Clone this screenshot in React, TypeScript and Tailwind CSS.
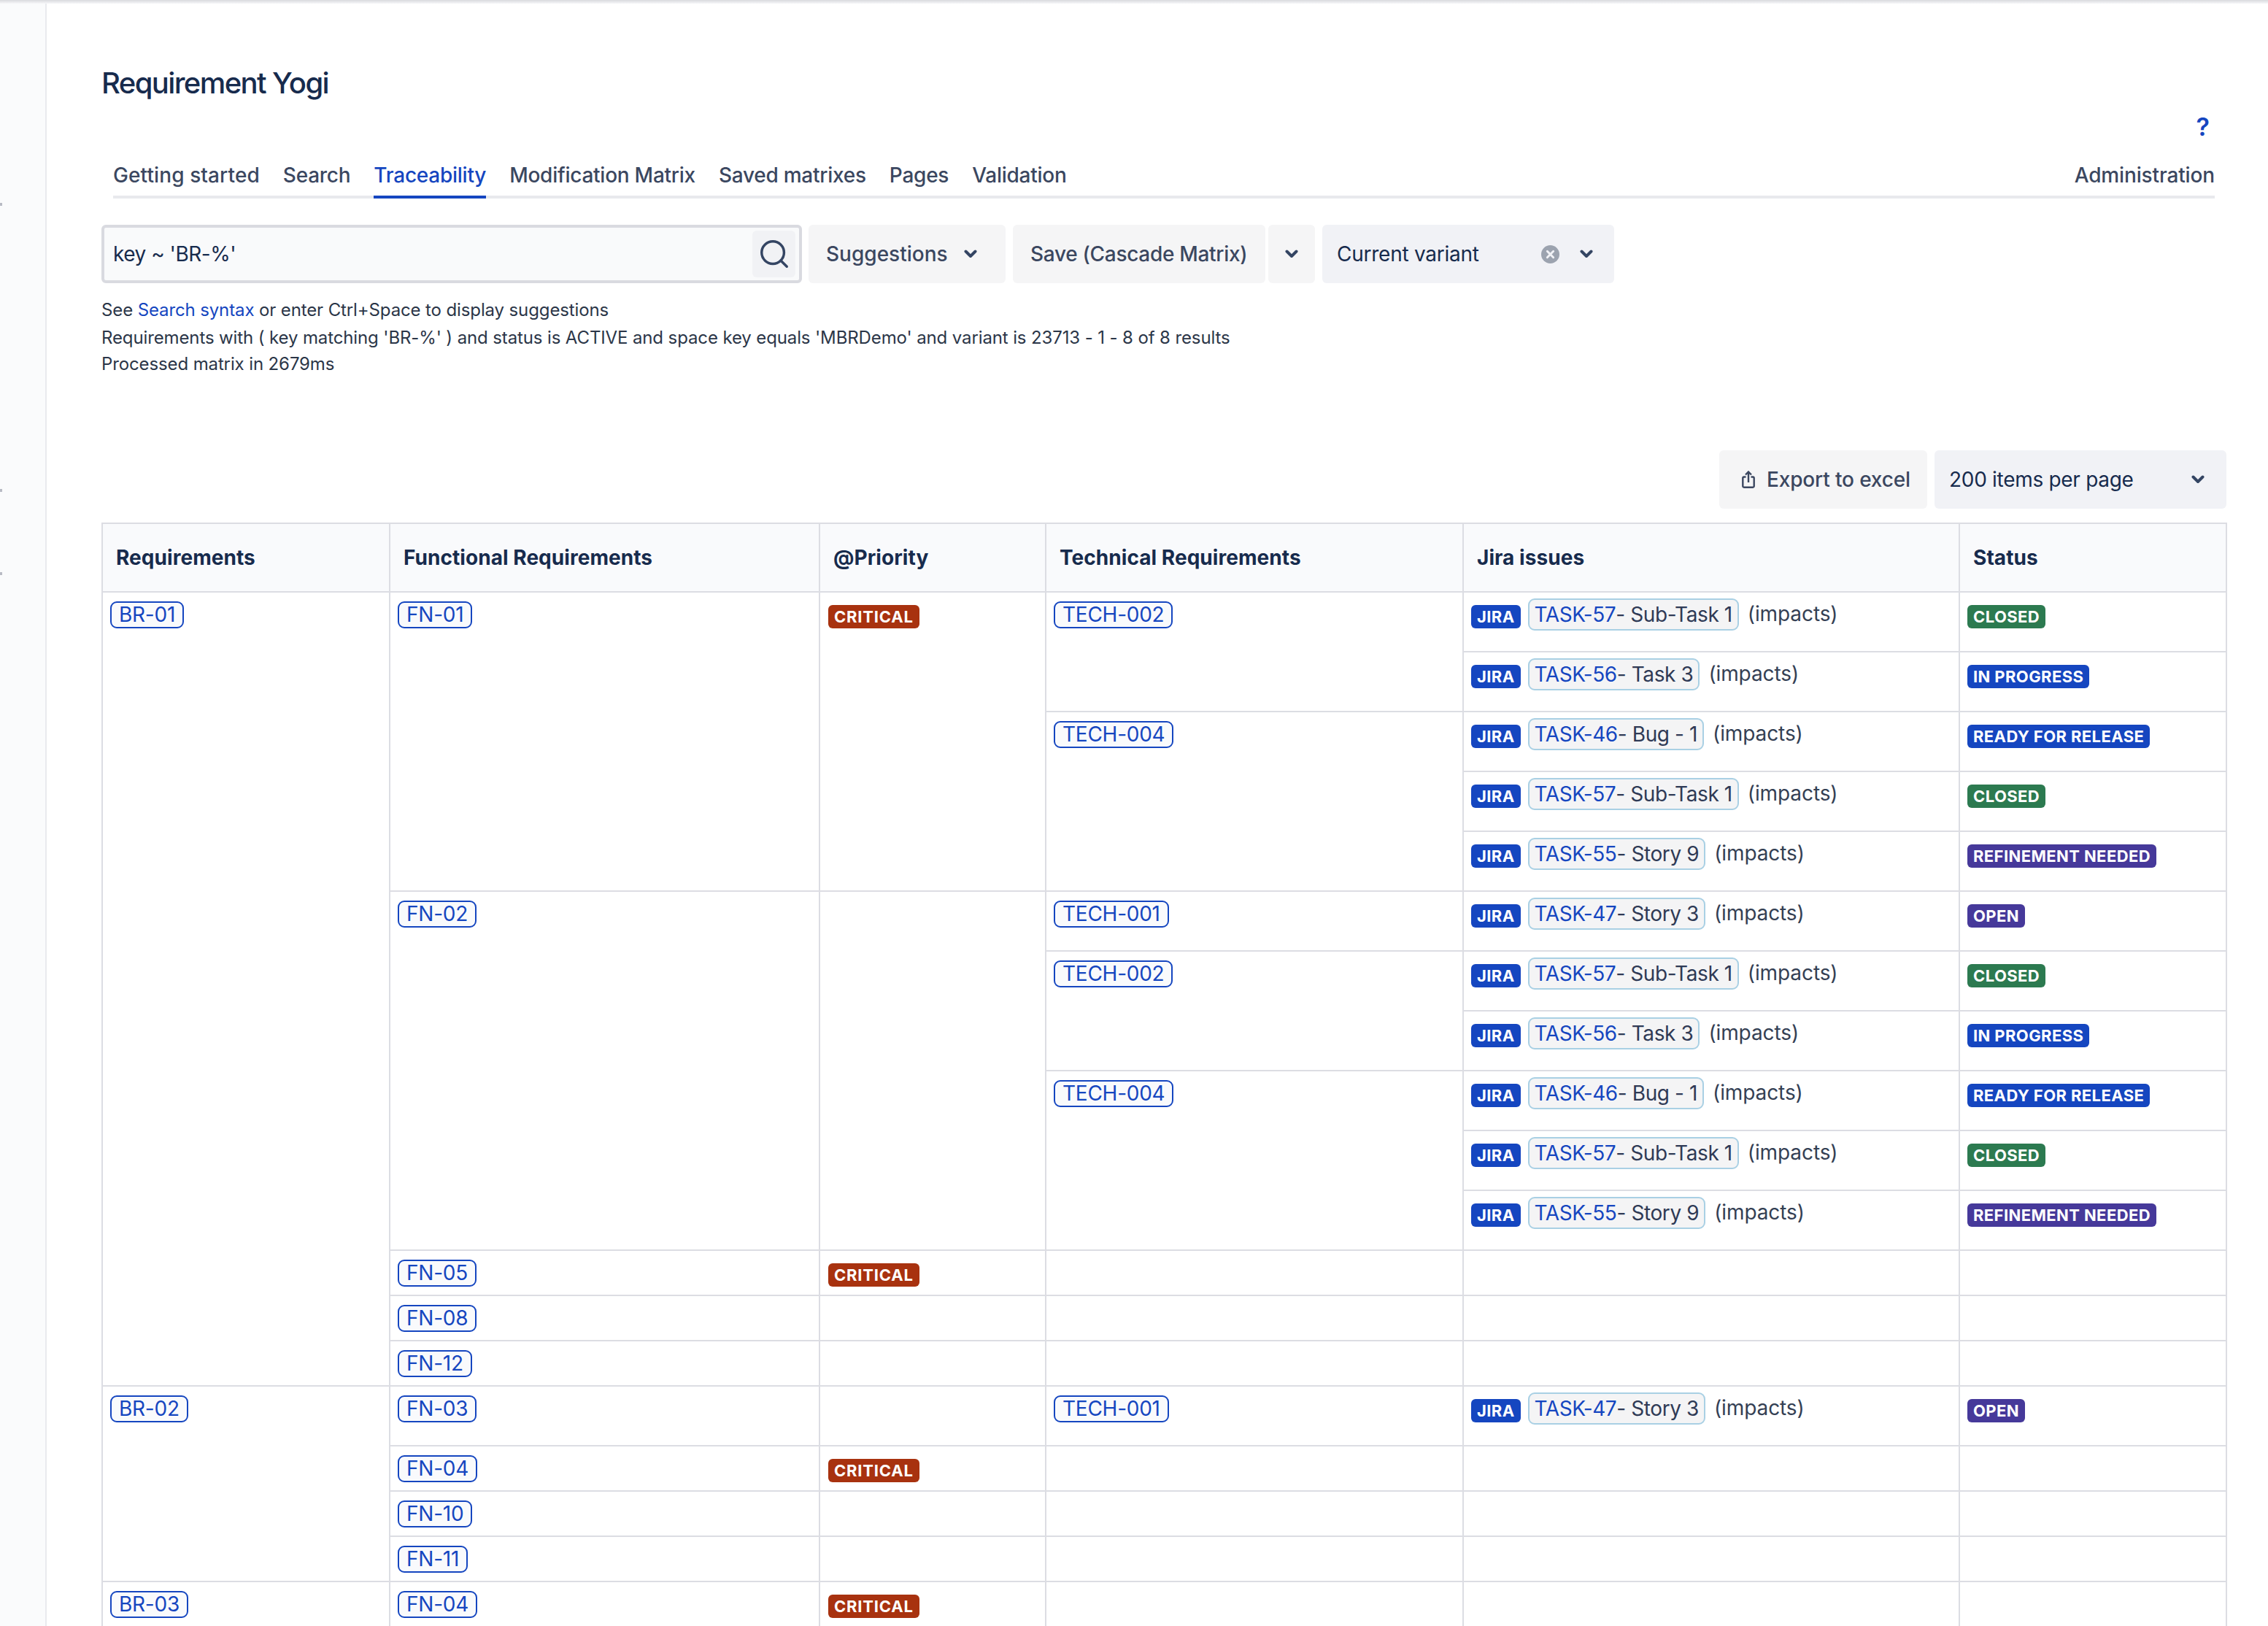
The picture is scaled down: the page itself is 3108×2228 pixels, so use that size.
import { Search } from "lucide-react"

type JiraRow = { task: string; title: string; status: string }

const statusColors: Record<string, string> = {
  CLOSED: "bg-[#2c7a50]",
  "IN PROGRESS": "bg-[#1546c0]",
  "READY FOR RELEASE": "bg-[#1546c0]",
  "REFINEMENT NEEDED": "bg-[#46399a]",
  OPEN: "bg-[#46399a]",
}

const sub57 = { task: "TASK-57", title: "- Sub-Task 1", status: "CLOSED" }
const task56 = { task: "TASK-56", title: "- Task 3", status: "IN PROGRESS" }
const bug46 = { task: "TASK-46", title: "- Bug - 1", status: "READY FOR RELEASE" }
const story55 = { task: "TASK-55", title: "- Story 9", status: "REFINEMENT NEEDED" }
const story47 = { task: "TASK-47", title: "- Story 3", status: "OPEN" }

const tabs = [
  { label: "Getting started", className: "tracking-[0.1px] text-[#3b4760]" },
  { label: "Search", className: "tracking-[-0.25px] text-[#3b4760]" },
  { label: "Traceability", className: "-mb-[4px] h-[51px] border-b-4 border-[#1546c0] tracking-[-0.25px] text-[#1546c0]" },
  { label: "Modification Matrix", className: "tracking-[-0.25px] text-[#3b4760]" },
  { label: "Saved matrixes", className: "tracking-[-0.25px] text-[#3b4760]" },
  { label: "Pages", className: "tracking-[-0.25px] text-[#3b4760]" },
  { label: "Validation", className: "tracking-[-0.25px] text-[#3b4760]" },
]

function Chevron({ className = "" }: { className?: string }) {
  return (
    <svg width="18" height="12" viewBox="0 0 18 12" fill="none" stroke="#344563" strokeWidth="4" strokeLinecap="round" strokeLinejoin="round" className={`shrink-0 ${className}`}>
      <path d="M2.500 2.500L9 9l6.500-6.500" />
    </svg>
  )
}

function Pill({ label }: { label: string }) {
  return (
    <span className="inline-block h-[37px] rounded-[9px] border-2 border-[#1546c0] bg-[#f9fafc] px-[10px] text-[28px] leading-[33px] tracking-[-0.25px] text-[#1546c0] align-top">
      {label}
    </span>
  )
}

function Lozenge({ label, color }: { label: string; color: string }) {
  return (
    <span className={`inline-block h-[32px] rounded-[6px] px-[8px] text-[22px] leading-[32px] font-bold tracking-[0.4px] text-white align-top ${color}`}>
      {label}
    </span>
  )
}

function JiraCells({ row }: { row: JiraRow }) {
  return (
    <>
      <td className="border-2 border-[#dcdde3] px-[10px] pt-[8px] align-top">
        <div className="flex items-start">
          <span className="mt-[9px]">
            <Lozenge label="JIRA" color="bg-[#1546c0]" />
          </span>
          <span className="ml-[10px] h-[44px] rounded-[9px] border-2 border-[#a9d0e4] bg-[#f4f4f5] px-[7px] text-[28px] leading-[40px] tracking-[-0.4px] text-[#2f3a55]">
            <span className="text-[#1546c0]">{row.task}</span>
            {row.title}
          </span>
          <span className="ml-[12px] text-[28px] leading-[43px] tracking-[-0.1px] text-[#344054]">(impacts)</span>
        </div>
      </td>
      <td className="border-2 border-[#dcdde3] px-[10px] pt-[17px] align-top">
        <Lozenge label={row.status} color={statusColors[row.status]} />
      </td>
    </>
  )
}

function EmptyCells() {
  return (
    <>
      <td className="border-2 border-[#dcdde3]" />
      <td className="border-2 border-[#dcdde3]" />
      <td className="border-2 border-[#dcdde3]" />
    </>
  )
}

function Critical() {
  return (
    <span className="ml-[1px] inline-block h-[32px] rounded-[6px] bg-[#a8320f] px-[8px] text-[22px] leading-[32px] font-bold tracking-[0.8px] text-white align-top">
      CRITICAL
    </span>
  )
}

function Cell({ children, rowSpan, pt = "pt-[12px]" }: { children?: React.ReactNode; rowSpan?: number; pt?: string }) {
  return (
    <td rowSpan={rowSpan} className={`border-2 border-[#dcdde3] px-[10px] align-top ${pt}`}>
      {children}
    </td>
  )
}

function ShortRow({ fn, critical, first, tall }: { fn: string; critical?: boolean; first?: string; tall?: boolean }) {
  return (
    <tr className={tall ? "h-[82px]" : "h-[62px]"}>
      {first && (
        <Cell>
          <Pill label={first} />
        </Cell>
      )}
      <Cell>
        <Pill label={fn} />
      </Cell>
      <Cell pt="pt-[17px]">{critical && <Critical />}</Cell>
      <EmptyCells />
    </tr>
  )
}

export default function App() {
  return (
    <div className="relative flex h-[2228px] overflow-hidden bg-white font-['Inter',sans-serif]">
      <div className="absolute inset-x-0 top-0 h-[5px] bg-gradient-to-b from-[#d9dade] to-[#f7f7f9]" />
      <span className="absolute left-0 top-[278px] h-[4px] w-[3px] bg-[#b8bbc4]" />
      <span className="absolute left-0 top-[670px] h-[4px] w-[3px] bg-[#b8bbc4]" />
      <span className="absolute left-0 top-[784px] h-[4px] w-[3px] bg-[#b8bbc4]" />
      <aside className="w-[64px] shrink-0 border-r-2 border-[#e9eaee] bg-[#fafbfc]" />

      <main className="min-w-0 flex-1 pl-[75px] pr-[57px]">
        <h1 className="mt-[90px] text-[40px] leading-[48px] font-medium tracking-[-1.6px] text-[#172b4d]">Requirement Yogi</h1>

        <div className="mt-[18px] flex justify-end pr-[23px]">
          <span className="text-[34px] leading-[36px] font-semibold text-[#1546c0]">?</span>
        </div>

        <nav className="ml-[16px] mr-[16px] mt-[29px] flex h-[51px] justify-between border-b-4 border-[#e8e9ed]">
          <div className="flex gap-[32px]">
            {tabs.map((tab) => (
              <a key={tab.label} className={`text-[28px] leading-[38px] font-medium ${tab.className}`}>
                {tab.label}
              </a>
            ))}
          </div>
          <a className="text-[28px] leading-[38px] font-medium tracking-[-0.14px] text-[#3b4760]">Administration</a>
        </nav>

        <div className="mt-[36px] flex h-[80px]">
          <div className="flex w-[960px] items-center rounded-[6px] border-4 border-[#d9dae0] bg-[#f9fafb] pl-[12px] pr-[5px]">
            <span className="flex-1 text-[28px] tracking-[-0.5px] text-[#172b4d]">key ~ 'BR-%'</span>
            <span className="flex h-[64px] w-[59px] items-center justify-center rounded-[6px] bg-[#f1f2f5]">
              <Search size={46} strokeWidth={1.8} className="text-[#344563]" />
            </span>
          </div>
          <button className="ml-[9px] flex w-[270px] items-center rounded-[6px] bg-[#f5f5f6] pl-[24px] text-[28px] font-medium text-[#3b4760]">
            Suggestions
            <Chevron className="ml-[22px]" />
          </button>
          <button className="ml-[10px] w-[346px] rounded-[6px] bg-[#f5f5f6] pl-[24px] text-left text-[28px] font-medium tracking-[-0.3px] whitespace-nowrap text-[#3b4760]">
            Save (Cascade Matrix)
          </button>
          <button className="ml-[4px] flex w-[64px] items-center justify-center rounded-[6px] bg-[#f5f5f6]">
            <Chevron />
          </button>
          <div className="ml-[10px] flex w-[400px] items-center rounded-[6px] bg-[#f1f2f6] pl-[20px] text-[28px] tracking-[-0.25px] text-[#172b4d]">
            <span className="flex-1">Current variant</span>
            <svg width="25" height="25" viewBox="0 0 24 24" className="mr-[28px]">
              <circle cx="12" cy="12" r="12" fill="#9ca3af" />
              <path d="M8 8l8 8M16 8l-8 8" stroke="#f1f2f6" strokeWidth="2.800" strokeLinecap="round" />
            </svg>
            <Chevron className="mr-[29px]" />
          </div>
        </div>

        <div className="mt-[19px] text-[24px] tracking-[-0.12px] text-[#2b3648]">
          <p className="leading-[36px]">
            See <a className="text-[#1546c0]">Search syntax</a> or enter Ctrl+Space to display suggestions
          </p>
          <p className="mt-[2px] leading-[36px]">
            Requirements with ( key matching 'BR-%' ) and status is ACTIVE and space key equals 'MBRDemo' and variant is 23713 - 1 - 8 of 8 results
          </p>
          <p className="leading-[36px]">Processed matrix in 2679ms</p>
        </div>

        <div className="mt-[100px] flex h-[80px] justify-end">
          <button className="flex w-[285px] items-center rounded-[6px] bg-[#f5f5f6] pl-[31px] text-[28px] font-medium tracking-[-0.15px] text-[#3b4760]">
            <svg width="18" height="24" viewBox="0 0 18 24" fill="none" stroke="#3b4760" strokeWidth="2.400" className="mr-[16px] shrink-0">
              <path d="M5.500 8.500H3A1.800 1.800 0 0 0 1.300 10.300V21A1.800 1.800 0 0 0 3 22.700H15A1.800 1.800 0 0 0 16.700 21V10.300A1.800 1.800 0 0 0 15 8.500H12.500" />
              <path d="M9 16V1.500M5 5.500l4-4 4 4" />
            </svg>
            Export to excel
          </button>
          <button className="ml-[10px] flex w-[400px] items-center justify-between rounded-[6px] bg-[#f1f2f6] pl-[20px] pr-[30px] text-[28px] tracking-[-0.3px] text-[#172b4d]">
            200 items per page
            <Chevron />
          </button>
        </div>

        <table className="mt-[19px] w-[2911px] table-fixed border-collapse border-2 border-[#dcdde3]">
          <colgroup>
            <col className="w-[394px]" />
            <col className="w-[589px]" />
            <col className="w-[310px]" />
            <col className="w-[572px]" />
            <col className="w-[680px]" />
            <col className="w-[366px]" />
          </colgroup>
          <thead>
            <tr className="h-[94px] bg-[#f9fafc] text-left text-[28px] tracking-[0.05px] text-[#172b4d]">
              {["Requirements", "Functional Requirements", "@Priority", "Technical Requirements", "Jira issues", "Status"].map((h) => (
                <th key={h} className="border-2 border-[#dcdde3] pl-[18px] font-bold">
                  {h}
                </th>
              ))}
            </tr>
          </thead>
          <tbody>
            <tr className="h-[82px]">
              <Cell rowSpan={14}>
                <Pill label="BR-01" />
              </Cell>
              <Cell rowSpan={5}>
                <Pill label="FN-01" />
              </Cell>
              <Cell rowSpan={5} pt="pt-[17px]">
                <Critical />
              </Cell>
              <Cell rowSpan={2}>
                <Pill label="TECH-002" />
              </Cell>
              <JiraCells row={sub57} />
            </tr>
            <tr className="h-[82px]">
              <JiraCells row={task56} />
            </tr>
            <tr className="h-[82px]">
              <Cell rowSpan={3}>
                <Pill label="TECH-004" />
              </Cell>
              <JiraCells row={bug46} />
            </tr>
            <tr className="h-[82px]">
              <JiraCells row={sub57} />
            </tr>
            <tr className="h-[82px]">
              <JiraCells row={story55} />
            </tr>
            <tr className="h-[82px]">
              <Cell rowSpan={6}>
                <Pill label="FN-02" />
              </Cell>
              <Cell rowSpan={6} />
              <Cell>
                <Pill label="TECH-001" />
              </Cell>
              <JiraCells row={story47} />
            </tr>
            <tr className="h-[82px]">
              <Cell rowSpan={2}>
                <Pill label="TECH-002" />
              </Cell>
              <JiraCells row={sub57} />
            </tr>
            <tr className="h-[82px]">
              <JiraCells row={task56} />
            </tr>
            <tr className="h-[82px]">
              <Cell rowSpan={3}>
                <Pill label="TECH-004" />
              </Cell>
              <JiraCells row={bug46} />
            </tr>
            <tr className="h-[82px]">
              <JiraCells row={sub57} />
            </tr>
            <tr className="h-[82px]">
              <JiraCells row={story55} />
            </tr>
            <ShortRow fn="FN-05" critical />
            <ShortRow fn="FN-08" />
            <ShortRow fn="FN-12" />
            <tr className="h-[82px]">
              <Cell rowSpan={4}>
                <Pill label="BR-02" />
              </Cell>
              <Cell>
                <Pill label="FN-03" />
              </Cell>
              <Cell />
              <Cell>
                <Pill label="TECH-001" />
              </Cell>
              <JiraCells row={story47} />
            </tr>
            <ShortRow fn="FN-04" critical />
            <ShortRow fn="FN-10" />
            <ShortRow fn="FN-11" />
            <ShortRow first="BR-03" fn="FN-04" critical tall />
          </tbody>
        </table>
      </main>
    </div>
  )
}
